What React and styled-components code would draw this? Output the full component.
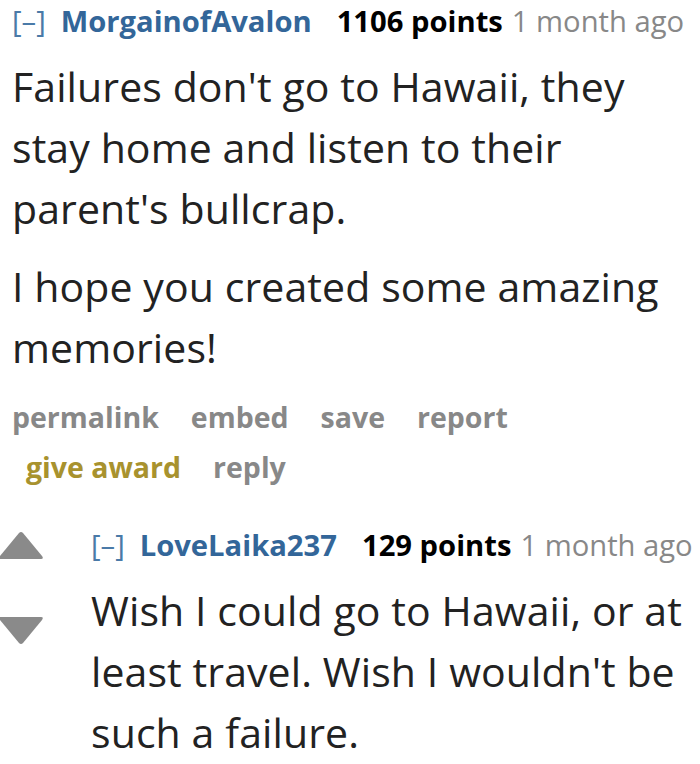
import React from "react";
import styled, { createGlobalStyle } from "styled-components";

const GlobalStyle = createGlobalStyle`
  html, body {
    margin: 0;
    padding: 0;
    background: #fff;
  }
  body {
    font-family: "Open Sans", "Noto Sans", sans-serif;
    color: #222;
  }
`;

const Page = styled.div`
  width: 700px;
  height: 764px;
  overflow: hidden;
  background: #fff;
`;

const Comment = styled.div`
  padding-left: ${(p) => p.indent}px;
`;

const Tagline = styled.div`
  display: flex;
  align-items: baseline;
  white-space: nowrap;
  font-size: 29.2px;
  line-height: 40px;
  margin-top: ${(p) => p.top || 0}px;
`;

const Expand = styled.span`
  color: #4a7aa8;
  font-weight: 400;
  margin-right: 15px;
`;

const Author = styled.span`
  color: #369;
  font-weight: 700;
  margin-right: 25px;
`;

const Score = styled.span`
  color: #000;
  font-weight: 700;
  margin-right: 9px;
`;

const Time = styled.span`
  color: #888;
  font-weight: 400;
`;

const Body = styled.div`
  font-size: 41px;
  letter-spacing: 0.1px;
  line-height: 61px;
  margin-top: 15px;
  color: #222;

  p {
    margin: 0 0 17px;
  }
  p:last-child {
    margin-bottom: 0;
  }
`;

const Buttons = styled.ul`
  list-style: none;
  margin: 14px 0 0;
  padding: 0;
  font-size: 28.5px;
  line-height: 50px;
  font-weight: 700;

  li {
    display: inline-block;
    padding: 0 18px 0 14px;
  }
  li:first-child {
    padding-left: 0;
  }
`;

const ButtonLink = styled.a`
  color: ${(p) => (p.gold ? "#a8922e" : "#888")};
  text-decoration: none;
`;

const Child = styled.div`
  display: grid;
  grid-template-columns: 91px 1fr;
  margin-top: 33px;
`;

const MidCol = styled.div`
  display: flex;
  flex-direction: column;
  gap: 54px;
  padding-top: 6px;
  margin-left: -2px;
`;

const Arrow = ({ down }) => (
  <svg width="46" height="30" viewBox="0 0 46 30">
    <path
      d={
        down
          ? "M3 2 L43 2 Q46 2 44 5 L25 28 Q23 30 21 28 L2 5 Q0 2 3 2 Z"
          : "M3 28 L43 28 Q46 28 44 25 L25 2 Q23 0 21 2 L2 25 Q0 28 3 28 Z"
      }
      fill="#8a8a8a"
    />
  </svg>
);

const Entry = styled.div``;

export default function App() {
  return (
    <Page>
      <GlobalStyle />
      <Comment indent={12}>
        <Tagline top={1}>
          <Expand>[–]</Expand>
          <Author>MorgainofAvalon</Author>
          <Score>1106 points</Score>
          <Time>1 month ago</Time>
        </Tagline>
        <Body>
          <p>
            Failures don't go to Hawaii, they stay home and listen to their
            parent's bullcrap.
          </p>
          <p>I hope you created some amazing memories!</p>
        </Body>
        <Buttons>
          <li>
            <ButtonLink>permalink</ButtonLink>
          </li>
          <li>
            <ButtonLink>embed</ButtonLink>
          </li>
          <li>
            <ButtonLink>save</ButtonLink>
          </li>
          <li>
            <ButtonLink>report</ButtonLink>
          </li>
          <li>
            <ButtonLink gold>give award</ButtonLink>
          </li>
          <li>
            <ButtonLink>reply</ButtonLink>
          </li>
        </Buttons>
      </Comment>
      <Child>
        <MidCol>
          <Arrow />
          <Arrow down />
        </MidCol>
        <Entry>
          <Tagline>
            <Expand>[–]</Expand>
            <Author>LoveLaika237</Author>
            <Score>129 points</Score>
            <Time>1 month ago</Time>
          </Tagline>
          <Body>
            <p>
              Wish I could go to Hawaii, or at least travel. Wish I wouldn't be
              such a failure.
            </p>
          </Body>
        </Entry>
      </Child>
    </Page>
  );
}
